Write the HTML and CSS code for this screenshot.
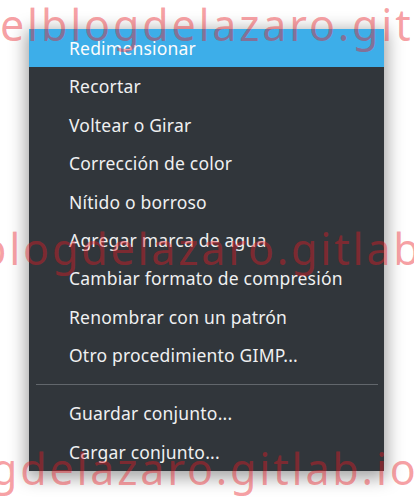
FILE: index.html
```html
<!DOCTYPE html>
<html lang="es">
<head>
<meta charset="utf-8">
<title>Menú</title>
<link rel="stylesheet" href="styles.css">
</head>
<body>
<div class="menu">
  <div class="item active">Redimensionar</div>
  <div class="item">Recortar</div>
  <div class="item">Voltear o Girar</div>
  <div class="item">Corrección de color</div>
  <div class="item">Nítido o borroso</div>
  <div class="item">Agregar marca de agua</div>
  <div class="item">Cambiar formato de compresión</div>
  <div class="item">Renombrar con un patrón</div>
  <div class="item">Otro procedimiento GIMP...</div>
  <div class="separator"></div>
  <div class="item">Guardar conjunto...</div>
  <div class="item">Cargar conjunto...</div>
</div>
<div class="watermark" aria-hidden="true">
  <div class="wm-row wm-row1">elblogdelazaro.gitlab.io</div>
  <div class="wm-row wm-row2">elblogdelazaro.gitlab.io</div>
  <div class="wm-row wm-row3">elblogdelazaro.gitlab.io</div>
</div>
</body>
</html>
```

FILE: styles.css
```css
html, body {
  margin: 0;
  padding: 0;
  background: #ffffff;
  width: 414px;
  height: 500px;
  overflow: hidden;
}

body {
  position: relative;
  font-family: "Noto Sans", "Open Sans", sans-serif;
}

.menu {
  margin: 29px 0 0 29px;
  width: 355px;
  background: #31363b;
  box-shadow: 0 4px 16px 3px rgba(0, 0, 0, 0.36);
  display: flex;
  flex-direction: column;
}

.item {
  height: 38.4px;
  line-height: 38.4px;
  padding-left: 40px;
  font-size: 17.5px;
  letter-spacing: 0.2px;
  color: #eff0f1;
  white-space: nowrap;
}

.item.active {
  background: #3daee9;
  color: #fcfcfc;
}

.separator {
  height: 19.6px;
  display: flex;
  align-items: center;
  padding: 0 6px 0 7px;
}

.separator::before {
  content: "";
  flex: 1;
  height: 1px;
  background: #62676c;
}

.watermark {
  position: absolute;
  inset: 0;
  pointer-events: none;
  overflow: hidden;
}

.wm-row {
  position: absolute;
  font-family: "Noto Sans", sans-serif;
  font-size: 43px;
  letter-spacing: 2.8px;
  line-height: 1;
  color: rgba(235, 25, 35, 0.42);
  white-space: nowrap;
}

.wm-row1 { left: 0; top: 3px; }
.wm-row2 { left: -61px; top: 227px; }
.wm-row3 { left: -122px; top: 447px; }
```
